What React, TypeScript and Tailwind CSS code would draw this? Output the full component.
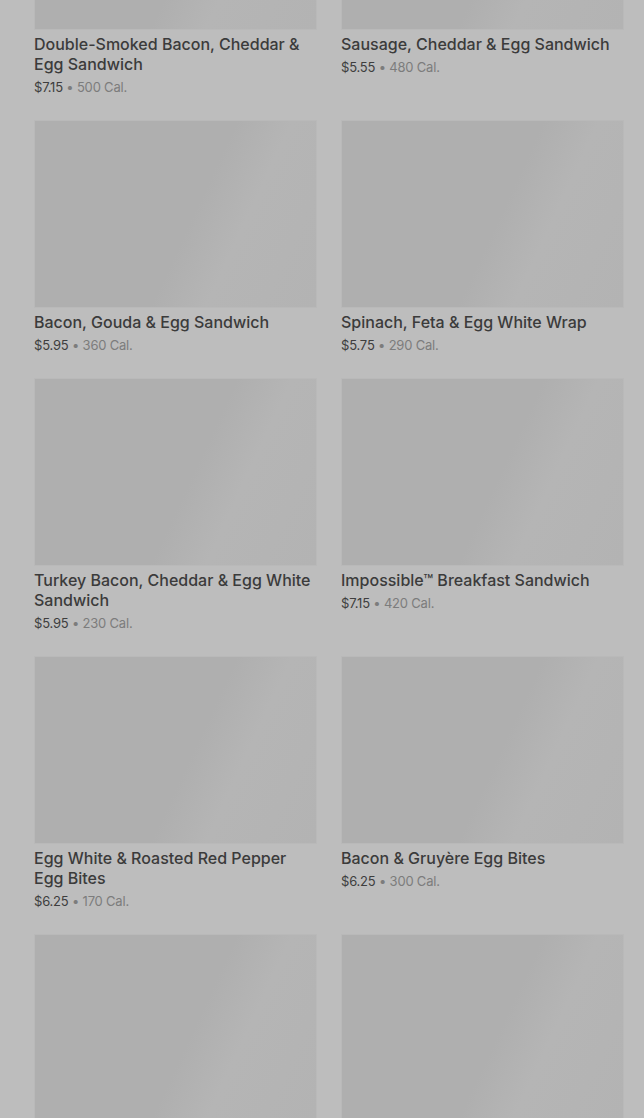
import React from "react";

type Item = {
    name?: string;
    price?: string;
    cal?: string;
};

const items: Item[] = [
    { name: "Double-Smoked Bacon, Cheddar & Egg Sandwich", price: "$7.15", cal: "500 Cal." },
    { name: "Sausage, Cheddar & Egg Sandwich", price: "$5.55", cal: "480 Cal." },
    { name: "Bacon, Gouda & Egg Sandwich", price: "$5.95", cal: "360 Cal." },
    { name: "Spinach, Feta & Egg White Wrap", price: "$5.75", cal: "290 Cal." },
    { name: "Turkey Bacon, Cheddar & Egg White Sandwich", price: "$5.95", cal: "230 Cal." },
    { name: "Impossible™ Breakfast Sandwich", price: "$7.15", cal: "420 Cal." },
    { name: "Egg White & Roasted Red Pepper Egg Bites", price: "$6.25", cal: "170 Cal." },
    { name: "Bacon & Gruyère Egg Bites", price: "$6.25", cal: "300 Cal." },
    // still loading
    {},
    {},
];

function ProductCard({ name, price, cal }: Item) {
    return (
        <div className="flex flex-col">
            <div className="h-[188px] w-full border border-[#b9b9b9] bg-[linear-gradient(115deg,#afafaf_0%,#afafaf_55%,#b5b5b5_70%,#b3b3b3_100%)]" />
            {name && (
                <>
                    <p className="mt-[4px] pr-[2px] text-[16px] leading-[20px] font-medium text-[#3b3b3b]">
                        {name}
                    </p>
                    <p className="mt-[3px] text-[13px] leading-[20px] tracking-[-0.2px] text-[#3e3e3e]">
                        {price}
                        <span className="text-[#7c7c7c]"> • {cal}</span>
                    </p>
                </>
            )}
        </div>
    );
}

export default function App() {
    return (
        <div
            className="min-h-screen bg-[#bdbdbd] pb-[40px]"
            style={{ fontFamily: "Inter, 'Liberation Sans', sans-serif" }}
        >
            <div className="mt-[-158px] pl-[34px] pr-[20px] grid grid-cols-2 gap-x-[24px] gap-y-[23px]">
                {items.map((item, i) => (
                    <ProductCard key={i} {...item} />
                ))}
            </div>
        </div>
    );
}
